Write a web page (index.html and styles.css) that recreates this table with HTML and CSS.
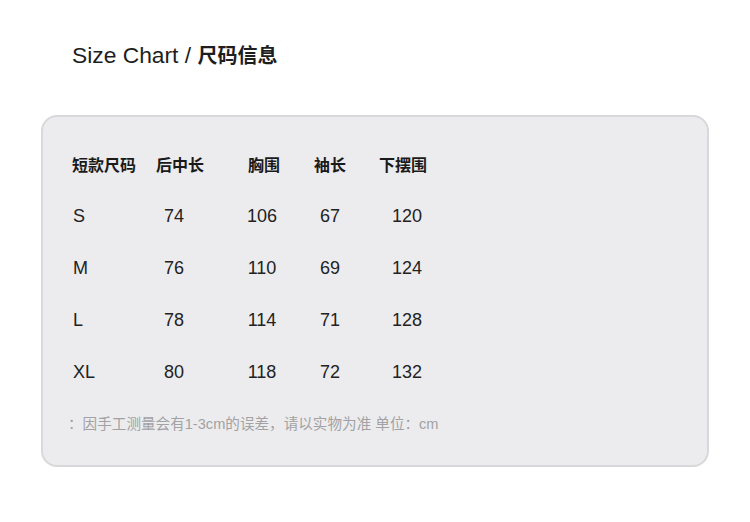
FILE: index.html
```html
<!DOCTYPE html>
<html lang="zh">
<head>
<meta charset="utf-8">
<link rel="stylesheet" href="styles.css">
</head>
<body>
<h1 class="title">Size Chart / <b>尺码信息</b></h1>
<section class="card">
  <div class="grid">
    <div class="h first">短款尺码</div><div class="h h2">后中长</div><div class="h h3">胸围</div><div class="h">袖长</div><div class="h h5">下摆围</div>
    <div class="c first">S</div><div class="c">74</div><div class="c">106</div><div class="c">67</div><div class="c">120</div>
    <div class="c first">M</div><div class="c">76</div><div class="c">110</div><div class="c">69</div><div class="c">124</div>
    <div class="c first">L</div><div class="c">78</div><div class="c">114</div><div class="c">71</div><div class="c">128</div>
    <div class="c first xl">XL</div><div class="c">80</div><div class="c">118</div><div class="c">72</div><div class="c">132</div>
  </div>
  <p class="note">：因手工测量会有1-3cm的误差，请以实物为准 单位：cm</p>
</section>
</body>
</html>
```
FILE: styles.css
```css
html, body {
  margin: 0;
  padding: 0;
  background: #ffffff;
}
body {
  font-family: "Liberation Sans", "Noto Sans CJK SC", sans-serif;
  color: #1e1e1e;
  width: 750px;
  height: 522px;
  overflow: hidden;
}
.title {
  margin: 0;
  padding: 42px 0 0 72px;
  font-size: 22.8px;
  line-height: 26px;
  font-weight: normal;
  color: #1e1e1e;
  letter-spacing: 0;
}
.title b {
  font-weight: bold;
  font-size: 20px;
}
.card {
  box-sizing: border-box;
  margin: 46px 0 0 41px;
  width: 668px;
  height: 352px;
  background: #ececee;
  border: 2px solid #d8d8da;
  border-radius: 16px;
  padding: 21px 0 0 29px;
}
.grid {
  display: grid;
  grid-template-columns: 62px 80px 96px 40px 114px;
  grid-auto-rows: 52px;
  align-items: center;
}
.h {
  font-size: 16px;
  font-weight: bold;
  text-align: center;
  white-space: nowrap;
  color: #1a1a1a;
}
.h2 {
  padding-left: 12px;
}
.h3 {
  padding-left: 4px;
}
.h5 {
  padding-right: 8px;
}
.c {
  font-size: 18px;
  text-align: center;
  color: #222;
}
.first {
  text-align: left;
}
.c.first {
  padding-left: 1px;
}
.note {
  margin: 16px 0 0 -4px;
  font-size: 14.6px;
  line-height: 20px;
  color: #a2a2a4;
  white-space: nowrap;
}
```
